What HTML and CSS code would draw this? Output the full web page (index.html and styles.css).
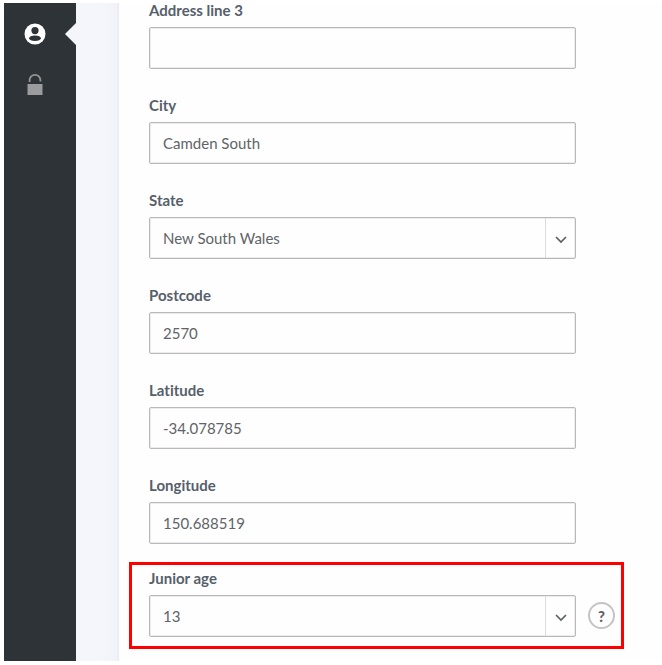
FILE: index.html
```html
<!DOCTYPE html>
<html lang="en">
<head>
<meta charset="utf-8">
<meta name="viewport" content="width=device-width, initial-scale=1">
<title>Club details</title>
<link rel="stylesheet" href="styles.css">
</head>
<body>
<div class="app">
  <nav class="sidebar" aria-label="Sections">
    <a class="nav-item nav-item-active" href="#profile" aria-label="Profile">
      <svg width="22" height="22" viewBox="0 0 22 22" aria-hidden="true">
        <circle cx="11" cy="11" r="10.5" fill="#fff"/>
        <circle cx="11" cy="7.6" r="3.6" fill="#2e3337"/>
        <ellipse cx="11" cy="15.3" rx="5.9" ry="2.8" fill="#2e3337"/>
      </svg>
    </a>
    <a class="nav-item" href="#access" aria-label="Access">
      <svg width="16" height="22" viewBox="0 0 16 22" aria-hidden="true">
        <path d="M2.6 9V7.2a5.4 5.4 0 0 1 10.8 0V8.6" fill="none" stroke="#929496" stroke-width="1.8"/>
        <rect x="0.5" y="11" width="15" height="11" fill="#999b9c"/>
      </svg>
    </a>
  </nav>
  <div class="gutter"></div>
  <main class="content">
    <form class="form">
      <div class="field">
        <label for="address3">Address line 3</label>
        <input class="control" id="address3" type="text">
      </div>
      <div class="field">
        <label for="city">City</label>
        <input class="control" id="city" type="text" value="Camden South">
      </div>
      <div class="field">
        <label for="state">State</label>
        <div class="select">
          <select class="control" id="state"><option>New South Wales</option></select>
          <span class="select-arrow"><svg width="12" height="8" viewBox="0 0 12 8" aria-hidden="true"><path d="M1 1l5 5 5-5" fill="none" stroke="#5b6167" stroke-width="1.7"/></svg></span>
        </div>
      </div>
      <div class="field">
        <label for="postcode">Postcode</label>
        <input class="control" id="postcode" type="text" value="2570">
      </div>
      <div class="field">
        <label for="latitude">Latitude</label>
        <input class="control" id="latitude" type="text" value="-34.078785">
      </div>
      <div class="field">
        <label for="longitude">Longitude</label>
        <input class="control" id="longitude" type="text" value="150.688519">
      </div>
      <div class="highlight">
        <div class="field">
          <label for="junior-age">Junior age</label>
          <div class="select">
            <select class="control" id="junior-age"><option>13</option></select>
            <span class="select-arrow"><svg width="12" height="8" viewBox="0 0 12 8" aria-hidden="true"><path d="M1 1l5 5 5-5" fill="none" stroke="#5b6167" stroke-width="1.7"/></svg></span>
          </div>
        </div>
        <button class="help" type="button" title="Help">?</button>
      </div>
    </form>
  </main>
</div>
</body>
</html>
```
FILE: styles.css
```css
* {
  box-sizing: border-box;
}

body {
  margin: 0;
  background: #fff;
  color: #56606a;
  font-family: Lato, "Liberation Sans", sans-serif;
  font-size: 15px;
  font-variant-ligatures: none;
}

.app {
  display: flex;
  min-height: 100vh;
  padding: 3px 0 4px 4px;
}

.sidebar {
  display: flex;
  flex: none;
  flex-direction: column;
  align-items: center;
  gap: 28px;
  width: 72px;
  padding: 20px 10px 0 0;
  background: #2e3337;
}

.nav-item {
  display: flex;
  position: relative;
}

.nav-item-active::after {
  content: "";
  position: absolute;
  top: 0;
  left: 41px;
  border: solid transparent;
  border-width: 11px 11px 11px 0;
  border-right-color: #f5f6fb;
}

.gutter {
  flex: none;
  width: 43px;
  background: linear-gradient(to right, #f5f6fb 60%, #f2f3f8 94%, #e9eaf0);
}

.content {
  flex: 1;
  min-width: 0;
  padding: 0 38px 12px 10px;
  background: #fefefe;
}

.form {
  display: flex;
  flex-direction: column;
  gap: 28px;
  margin-top: -1px;
  padding-left: 20px;
}

.field {
  display: flex;
  flex-direction: column;
  gap: 9px;
  width: 100%;
  max-width: 427px;
}

label {
  font-weight: 700;
  line-height: 16px;
}

.control {
  width: 100%;
  height: 42px;
  margin: 0;
  padding: 0 13px;
  border: 1px solid #b8b8ba;
  border-radius: 2px;
  background: #fefefe;
  box-shadow: inset 0 0 0 1px #ececed;
  color: #606468;
  font: inherit;
  appearance: none;
}

.select {
  position: relative;
}

.select .control {
  display: block;
  padding-right: 36px;
}

.select-arrow {
  display: flex;
  position: absolute;
  inset: 1px 1px 1px auto;
  align-items: center;
  justify-content: center;
  width: 30px;
  padding-top: 3px;
  border-left: 1px solid #dcdcde;
  pointer-events: none;
}

.highlight {
  display: flex;
  align-items: flex-end;
  gap: 12px;
  max-width: 495px;
  margin: -10px 0 0 -20px;
  padding: 5px 6px 9px 17px;
  border: 3px solid #f00;
}

.help {
  flex: none;
  width: 27px;
  height: 27px;
  margin-bottom: 8px;
  padding: 0;
  border: 2px solid #c4c4c6;
  border-radius: 50%;
  background: #fefefe;
  color: #606468;
  font: inherit;
  font-weight: 900;
  line-height: 20px;
}
```
